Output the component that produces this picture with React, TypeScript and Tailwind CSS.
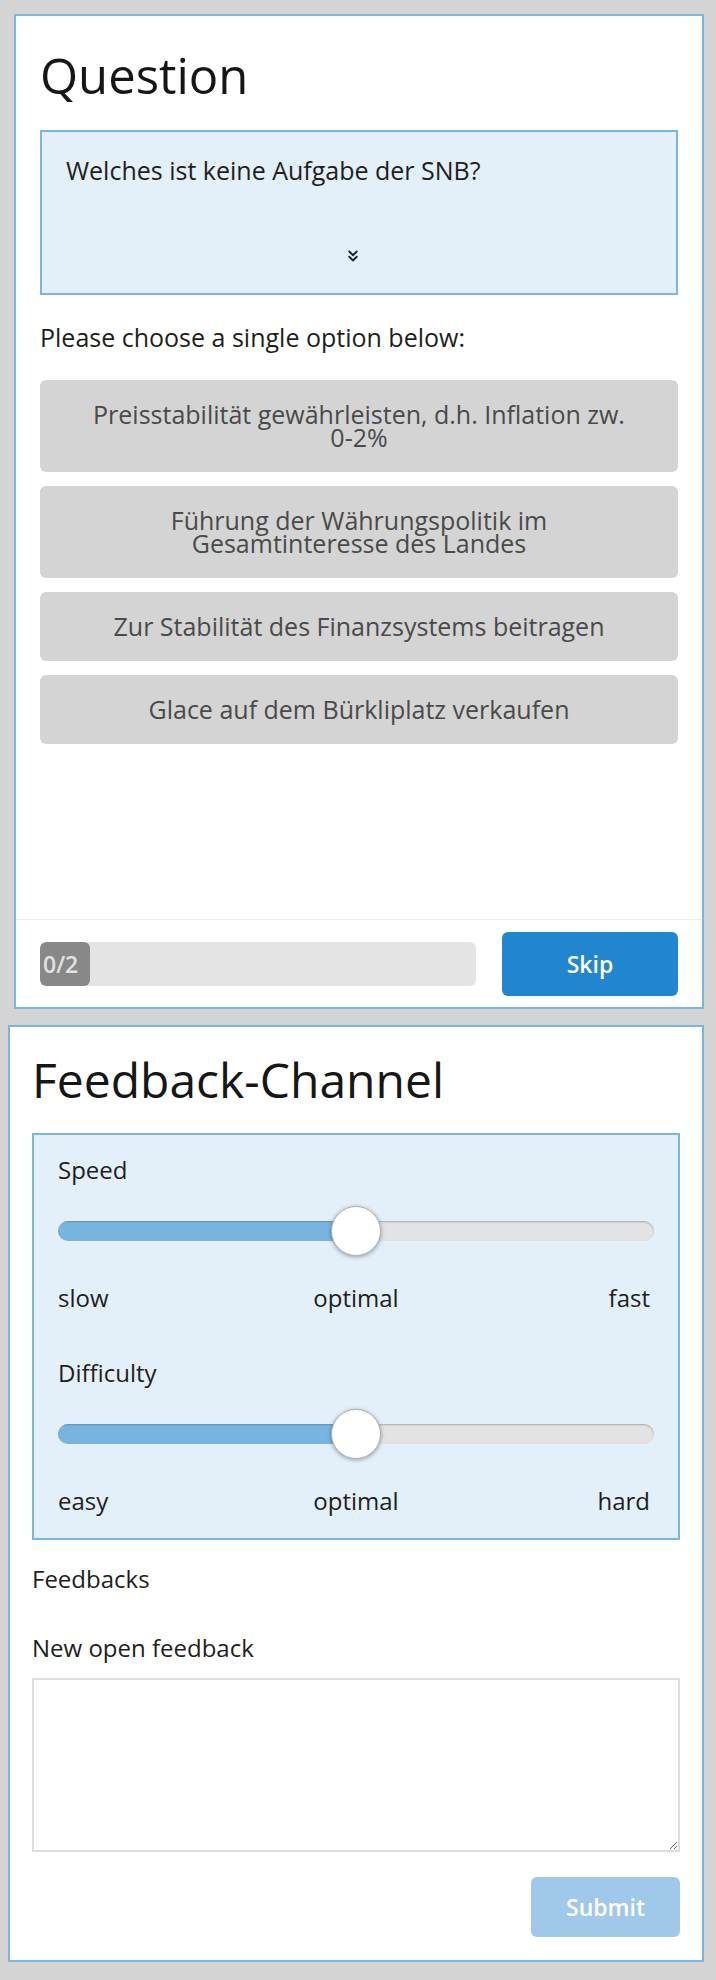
import { ChevronsDown } from "lucide-react";

const options = [
  "Preisstabilität gewährleisten, d.h. Inflation zw. 0-2%",
  "Führung der Währungspolitik im Gesamtinteresse des Landes",
  "Zur Stabilität des Finanzsystems beitragen",
  "Glace auf dem Bürkliplatz verkaufen",
];

function Slider({ label, left, right }: { label: string; left: string; right: string }) {
  return (
    <div>
      <div className="text-[24px] leading-[32px]">{label}</div>
      <div className="relative mt-[20px] flex h-[50px] items-center">
        <div className="h-[20px] w-full overflow-hidden rounded-full bg-[#e3e3e3] shadow-[inset_0_1px_2px_rgba(0,0,0,0.25)]">
          <div className="h-full w-1/2 bg-[#79b4e1] shadow-[inset_0_1px_2px_rgba(0,0,0,0.2)]" />
        </div>
        <div className="absolute left-1/2 top-0 h-[50px] w-[50px] -translate-x-1/2 rounded-full border border-[#b0b0b0] bg-white shadow-[0_1px_4px_rgba(0,0,0,0.35)]" />
      </div>
      <div className="mt-[26px] grid grid-cols-3 text-[24px] leading-[32px]">
        <span className="text-left">{left}</span>
        <span className="text-center">optimal</span>
        <span className="pr-[4px] text-right">{right}</span>
      </div>
    </div>
  );
}

export default function App() {
  return (
    <div
      className="min-h-[1980px] bg-[#d4d4d4] pt-[14px] font-medium text-[#1e1e1e]"
      style={{ fontFamily: '"Open Sans", "Noto Sans", sans-serif' }}
    >
      {/* question card */}
      <section className="ml-[14px] flex h-[995px] w-[690px] flex-col border-2 border-[#7ab6e3] bg-white">
        <div className="flex-1 px-[24px] pt-[34px]">
          <h1 className="text-[49px] font-medium leading-[50px] text-[#161616]">Question</h1>

          <div className="mt-[30px] flex h-[165px] flex-col border-2 border-[#7ab6e3] bg-[#e3eff9] px-[24px] pb-[28px] pt-[21px]">
            <p className="text-[25px] leading-[34px]">Welches ist keine Aufgabe der SNB?</p>
            <div className="mt-auto flex justify-center pr-[12px]">
              <ChevronsDown size={18} strokeWidth={2.5} className="text-[#222]" />
            </div>
          </div>

          <p className="mt-[25px] text-[25px] leading-[34px]">Please choose a single option below:</p>

          <div className="mt-[26px] flex flex-col gap-[14px]">
            {options.map((o) => (
              <button
                key={o}
                className="w-full rounded-[6px] bg-[#d4d4d4] px-[45px] py-[23px] text-center text-[25px] leading-[23px] text-[#4a4a4a]"
              >
                {o}
              </button>
            ))}
          </div>
        </div>

        <div className="flex items-center gap-[26px] border-t border-[#e4eef8] px-[24px] pb-[11px] pt-[12px]">
          <div className="flex h-[44px] flex-1 overflow-hidden rounded-[6px] bg-[#e4e4e4]">
            <div className="flex h-full w-[50px] items-center rounded-[6px] bg-[#888] pl-[3px] text-[23px] font-semibold text-[#e2e2e2]">
              0/2
            </div>
          </div>
          <button className="h-[64px] w-[176px] rounded-[6px] bg-[#2185d0] text-[23px] font-semibold text-white">
            Skip
          </button>
        </div>
      </section>

      {/* feedback card */}
      <section className="ml-[8px] mt-[16px] flex w-[696px] flex-col border-2 border-[#7ab6e3] bg-white px-[22px] pb-[23px] pt-[28px]">
        <h2 className="text-[48px] font-medium leading-[50px] text-[#161616]">Feedback-Channel</h2>

        <div className="mt-[28px] flex flex-col gap-[43px] border-2 border-[#7ab6e3] bg-[#e3eff9] px-[24px] pb-[21px] pt-[19px]">
          <Slider label="Speed" left="slow" right="fast" />
          <Slider label="Difficulty" left="easy" right="hard" />
        </div>

        <div className="mt-[24px] text-[24px] leading-[30px]">Feedbacks</div>
        <label className="mt-[39px] text-[24px] leading-[30px]">New open feedback</label>
        <textarea className="mt-[15px] h-[174px] w-full border-2 border-[#dedede] bg-white p-[10px] text-[22px] outline-none" />
        <button className="mt-[25px] h-[60px] w-[149px] self-end rounded-[6px] bg-[#a0c8ea] text-[23px] font-semibold text-white">
          Submit
        </button>
      </section>
    </div>
  );
}
